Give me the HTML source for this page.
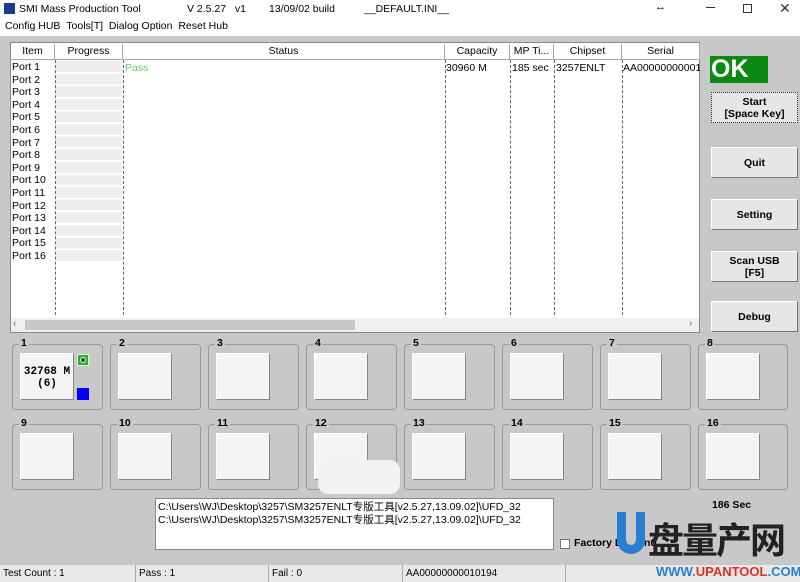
<!DOCTYPE html>
<html><head><meta charset="utf-8"><style>
*{margin:0;padding:0;box-sizing:border-box}
body{width:800px;height:582px;overflow:hidden;background:#c8c8c8;font-family:"Liberation Sans","Noto Sans CJK SC",sans-serif;font-size:10.5px;color:#000;position:relative}
.a{position:absolute}
.title{left:0;top:0;width:800px;height:18px;background:#fff}
.menu{left:0;top:18px;width:800px;height:18px;background:#fff}
.list{left:10px;top:42px;width:690px;height:291px;background:#fff;border:1px solid #888}
.hd{top:1px;height:16px;background:#fff;border-right:1px solid #aaa;border-bottom:1px solid #aaa;text-align:center;line-height:15px}
.vl{top:17px;height:255px;border-left:1px dashed #666}
.btn{left:711px;width:87px;height:31px;background:#e6e6e6;border:1px solid #fff;border-right-color:#777;border-bottom-color:#777;font-weight:bold;text-align:center;font-size:10.5px;display:flex;align-items:center;justify-content:center;line-height:12px}
.grp{width:91px;height:66px;border:1px solid #999;border-radius:4px}
.grp b{position:absolute;left:6px;top:-8px;background:#c8c8c8;padding:0 2px;font-size:10.5px}
.box{position:absolute;left:7px;top:8px;width:54px;height:47px;background:#f4f4f4;border:1px solid #fff;border-right-color:#888;border-bottom-color:#888}
.sb{top:565px;height:17px;background:#e8e8e8;border-left:1px solid #aaa;font-size:10px;line-height:17px;padding-left:3px}
</style></head><body>
<div class="a title"></div>
<div class="a" style="left:4px;top:3px;width:11px;height:11px;background:#1a3a8a"></div>
<div class="a" style="left:19px;top:3px">SMI Mass Production Tool</div>
<div class="a" style="left:187px;top:3px">V 2.5.27&nbsp;&nbsp;&nbsp;v1</div>
<div class="a" style="left:269px;top:3px">13/09/02 build</div>
<div class="a" style="left:364px;top:3px">__DEFAULT.INI__</div>
<div class="a" style="left:655px;top:1px;font-size:11px">↔</div>
<div class="a" style="left:706px;top:7px;width:9px;height:1px;background:#333"></div>
<div class="a" style="left:743px;top:4px;width:9px;height:9px;border:1px solid #333"></div>
<div class="a" style="left:779px;top:0px;font-size:14px;color:#333">✕</div>
<div class="a menu"></div>
<div class="a" style="left:5px;top:20px">Config HUB&nbsp;&nbsp;Tools[T]&nbsp;&nbsp;Dialog Option&nbsp;&nbsp;Reset Hub</div>

<div class="a list">
<div class="a hd" style="left:0;width:44px">Item</div>
<div class="a hd" style="left:44px;width:68px">Progress</div>
<div class="a hd" style="left:112px;width:322px">Status</div>
<div class="a hd" style="left:434px;width:65px">Capacity</div>
<div class="a hd" style="left:499px;width:44px">MP Ti...</div>
<div class="a hd" style="left:543px;width:68px">Chipset</div>
<div class="a hd" style="left:611px;width:78px">Serial</div>
<div class="a vl" style="left:44px"></div><div class="a vl" style="left:112px"></div>
<div class="a vl" style="left:434px"></div><div class="a vl" style="left:499px"></div>
<div class="a vl" style="left:543px"></div><div class="a vl" style="left:611px"></div>
<div class="a" style="left:45px;top:18px;width:66px;height:200px;background:repeating-linear-gradient(#eee 0 11px,#fff 11px 12.6px)"></div>
<div class="a" style="left:1px;top:18px;line-height:12.6px;font-size:10.5px">Port 1<br>Port 2<br>Port 3<br>Port 4<br>Port 5<br>Port 6<br>Port 7<br>Port 8<br>Port 9<br>Port 10<br>Port 11<br>Port 12<br>Port 13<br>Port 14<br>Port 15<br>Port 16</div>
<div class="a" style="left:114px;top:19px;color:#6c6;font-size:10.5px">Pass</div>
<div class="a" style="left:435px;top:19px;font-size:10.5px">30960 M</div>
<div class="a" style="left:501px;top:19px;font-size:10.5px">185 sec</div>
<div class="a" style="left:545px;top:19px;font-size:10.5px">3257ENLT</div>
<div class="a" style="left:612px;top:19px;font-size:10.5px;width:77px;overflow:hidden;white-space:nowrap">AA000000000010194</div>
<div class="a" style="left:0;top:275px;width:688px;height:14px;background:#f0f0f0"></div>
<div class="a" style="left:14px;top:277px;width:330px;height:10px;background:#c8c8c8"></div>
<div class="a" style="left:2px;top:275px;font-size:10px;color:#666">‹</div>
<div class="a" style="left:678px;top:275px;font-size:10px;color:#666">›</div>
</div>

<div class="a" style="left:710px;top:56px;width:58px;height:27px;background:#0a8a10;color:#fff;font-weight:bold;font-size:25px;line-height:27px;padding-left:1px">OK</div>
<div class="a btn" style="top:92px;border:1px dotted #333">Start<br>[Space Key]</div>
<div class="a btn" style="top:147px">Quit</div>
<div class="a btn" style="top:199px">Setting</div>
<div class="a btn" style="top:251px">Scan USB<br>[F5]</div>
<div class="a btn" style="top:301px">Debug</div>

<div class="a grp" style="left:12px;top:344px"><b>1</b><div class="box" style="font-family:'Liberation Mono',monospace;font-weight:bold;font-size:11px;text-align:center;padding-top:12px;line-height:12px">32768 M<br>(6)</div>
<div class="a" style="left:64px;top:9px;width:12px;height:12px;background:#3a3;border:1px solid #cfc;border-radius:0"><div style="margin:2px;width:6px;height:6px;border-radius:50%;background:#060;border:1px solid #fff"></div></div>
<div class="a" style="left:64px;top:43px;width:12px;height:12px;background:#00f"></div></div>
<div class="a grp" style="left:110px;top:344px"><b>2</b><div class="box"></div></div>
<div class="a grp" style="left:208px;top:344px"><b>3</b><div class="box"></div></div>
<div class="a grp" style="left:306px;top:344px"><b>4</b><div class="box"></div></div>
<div class="a grp" style="left:404px;top:344px"><b>5</b><div class="box"></div></div>
<div class="a grp" style="left:502px;top:344px"><b>6</b><div class="box"></div></div>
<div class="a grp" style="left:600px;top:344px"><b>7</b><div class="box"></div></div>
<div class="a grp" style="left:698px;top:344px;width:90px"><b>8</b><div class="box"></div></div>
<div class="a grp" style="left:12px;top:424px"><b>9</b><div class="box"></div></div>
<div class="a grp" style="left:110px;top:424px"><b>10</b><div class="box"></div></div>
<div class="a grp" style="left:208px;top:424px"><b>11</b><div class="box"></div></div>
<div class="a grp" style="left:306px;top:424px"><b>12</b><div class="box"></div></div>
<div class="a grp" style="left:404px;top:424px"><b>13</b><div class="box"></div></div>
<div class="a grp" style="left:502px;top:424px"><b>14</b><div class="box"></div></div>
<div class="a grp" style="left:600px;top:424px"><b>15</b><div class="box"></div></div>
<div class="a grp" style="left:698px;top:424px;width:90px"><b>16</b><div class="box"></div></div>
<div class="a" style="left:318px;top:460px;width:82px;height:34px;background:#f2f2f2;border-radius:10px"></div>

<div class="a" style="left:155px;top:498px;width:399px;height:52px;background:#fff;border:1px solid #888;padding:2px 2px;font-size:10.5px;line-height:13px;white-space:nowrap;overflow:hidden">C:\Users\WJ\Desktop\3257\SM3257ENLT专版工具[v2.5.27,13.09.02]\UFD_32<br>C:\Users\WJ\Desktop\3257\SM3257ENLT专版工具[v2.5.27,13.09.02]\UFD_32</div>
<div class="a" style="left:712px;top:499px;font-weight:bold;font-size:10.5px">186 Sec</div>
<div class="a" style="left:560px;top:539px;width:10px;height:10px;background:#fff;border:1px solid #777"></div>
<div class="a" style="left:574px;top:537px;font-weight:bold;font-size:10.5px">Factory Dr&nbsp;&nbsp;&nbsp;&nbsp;and</div>

<div class="a" style="left:0;top:565px;width:800px;height:17px;background:#e8e8e8;border-top:1px solid #aaa"></div>
<div class="a sb" style="left:0;width:135px;border:0">Test Count : 1</div>
<div class="a sb" style="left:135px;width:133px">Pass : 1</div>
<div class="a sb" style="left:268px;width:134px">Fail : 0</div>
<div class="a sb" style="left:402px;width:163px">AA00000000010194</div>
<div class="a sb" style="left:565px;width:235px"></div>

<div class="a" style="left:617px;top:512px;width:28px;height:42px;border:9px solid #2a7fd0;border-top:0;border-radius:0 0 14px 14px"></div>
<div class="a" style="left:648px;top:518px;font-size:36px;font-weight:bold;color:#222;font-family:'Noto Sans CJK SC',sans-serif;line-height:40px;letter-spacing:-2px">盘量产网</div>
<div class="a" style="left:656px;top:564px;font-size:13px;font-weight:bold;color:#2a7fd0;letter-spacing:0px">WWW.<span style="color:#e03020">UPANTOOL</span>.COM</div>
</body></html>
